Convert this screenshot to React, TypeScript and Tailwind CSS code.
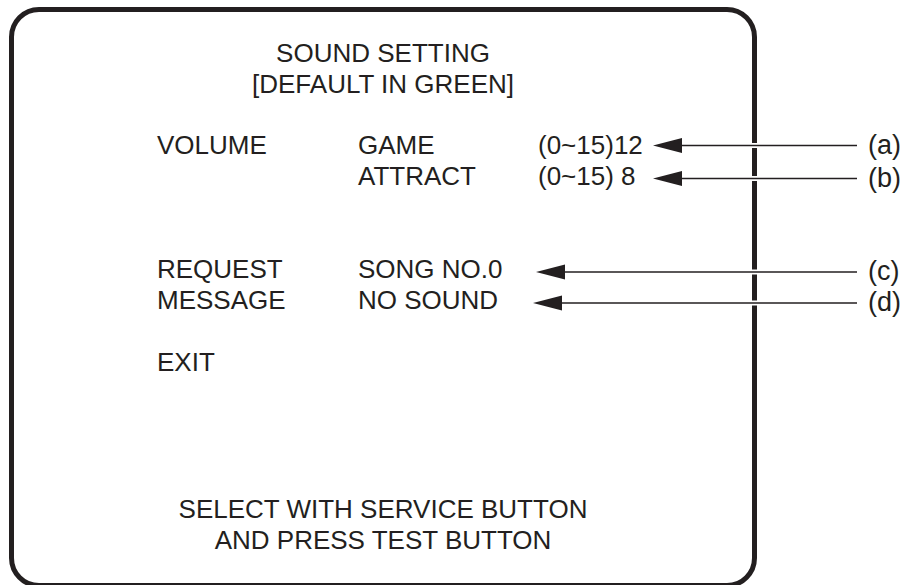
import React from 'react'

type Row = {
  name: string
  item: string
  value: string
}

const rows: (Row | null)[] = [
  { name: 'VOLUME', item: 'GAME', value: '(0~15)12' },
  { name: '', item: 'ATTRACT', value: '(0~15) 8' },
  null,
  null,
  { name: 'REQUEST', item: 'SONG NO.0', value: '' },
  { name: 'MESSAGE', item: 'NO SOUND', value: '' },
  null,
  { name: 'EXIT', item: '', value: '' },
]

// callout lines drawn over the screen frame
const callouts = [
  { label: '(a)', y: 145.5, tip: 653 },
  { label: '(b)', y: 178.5, tip: 653 },
  { label: '(c)', y: 272, tip: 536 },
  { label: '(d)', y: 303, tip: 533 },
]

function Callouts() {
  return (
    <svg
      className="absolute inset-0 pointer-events-none"
      width={907}
      height={585}
      viewBox="0 0 907 585"
    >
      {callouts.map((c) => (
        <g key={c.label}>
          <rect x={749} y={c.y - 2.5} width={12} height={5} fill="#ffffff" />
          <line x1={c.tip + 26} y1={c.y} x2={857} y2={c.y} stroke="#231f20" strokeWidth={1.4} />
          <polygon
            points={`${c.tip},${c.y} ${c.tip + 29},${c.y - 7.5} ${c.tip + 29},${c.y + 7.5}`}
            fill="#231f20"
          />
          <text
            x={868}
            y={c.y + 8}
            fill="#231f20"
            fontSize={27}
            fontFamily='"Liberation Sans", Arial, sans-serif'
          >
            {c.label}
          </text>
        </g>
      ))}
    </svg>
  )
}

export default function App() {
  return (
    <div
      className="relative w-[907px] h-[585px] overflow-hidden bg-white text-[#231f20] text-[26px] leading-[31px]"
      style={{ fontFamily: '"Liberation Sans", Arial, sans-serif' }}
    >
      <div className="ml-[9px] mt-[7px] w-[748px] h-[581px] border-[5px] border-[#231f20] rounded-[30px] flex flex-col pt-[26px] pb-[27px]">
        <div className="text-center">
          <div>SOUND SETTING</div>
          <div>[DEFAULT IN GREEN]</div>
        </div>

        <div className="mt-[30px] pl-[143px] grid grid-cols-[201px_180px_auto]">
          {rows.map((r, i) =>
            r ? (
              <React.Fragment key={i}>
                <div className="h-[31px]">{r.name}</div>
                <div className="h-[31px]">{r.item}</div>
                <div className="h-[31px]">{r.value}</div>
              </React.Fragment>
            ) : (
              <div key={i} className="col-span-3 h-[31px]" />
            ),
          )}
        </div>

        <div className="mt-auto text-center">
          <div>SELECT WITH SERVICE BUTTON</div>
          <div>AND PRESS TEST BUTTON</div>
        </div>
      </div>
      <Callouts />
    </div>
  )
}
